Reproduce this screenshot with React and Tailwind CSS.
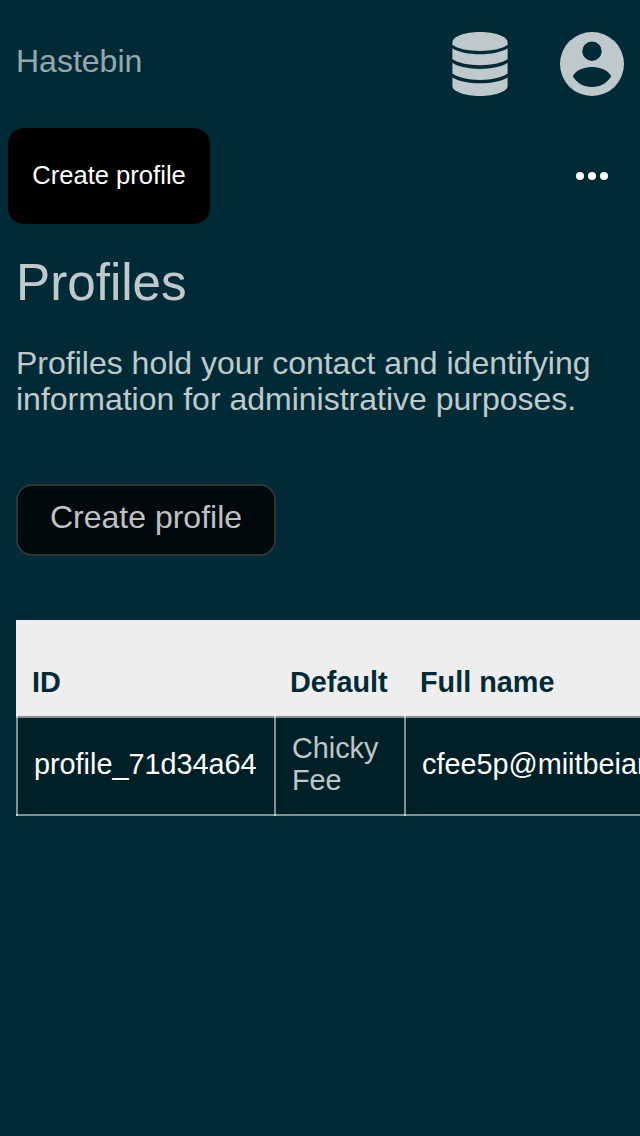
function DatabaseIcon() {
  return (
    <svg className="h-16 w-14" viewBox="0 0 56 64" fill="currentColor" aria-hidden="true">
      <path d="M28 0C43 0 55.600 4.600 55.600 10.200V12.800C50 17 40 18.900 28 18.900C16 18.900 6 17 0.400 12.800V10.200C0.400 4.600 13 0 28 0Z" />
      <path d="M0.400 16.300C6 20.200 17 22.300 28 22.300C39 22.300 50 20.200 55.600 16.300V27C50 31.200 39 33.200 28 33.200C17 33.200 6 31.200 0.400 27Z" />
      <path d="M0.400 30.800C6 34.800 17 36.900 28 36.900C39 36.900 50 34.800 55.600 30.800V41.600C50 45.800 39 47.900 28 47.900C17 47.900 6 45.800 0.400 41.600Z" />
      <path d="M0.400 45.300C6 49.300 17 51.300 28 51.300C39 51.300 50 49.300 55.600 45.300V54C55.600 59.500 43 64 28 64C13 64 0.400 59.500 0.400 54Z" />
    </svg>
  );
}

function AccountIcon() {
  return (
    <svg className="size-16" viewBox="0 0 64 64" fill="currentColor" fillRule="evenodd" aria-hidden="true">
      <path d="M32 0a32 32 0 1 0 0 64a32 32 0 1 0 0-64ZM32 9.500a9.700 9.700 0 1 1 0 19.400a9.700 9.700 0 1 1 0-19.400ZM12.800 44.200C15.500 38.500 23 34.900 32 34.900S48.500 38.500 51.200 44.200C47 51 40.500 55 32 55S17 51 12.800 44.200Z" />
    </svg>
  );
}

function Cell({ children, strong = false }) {
  return (
    <td
      className={`border-y-2 border-white/50 bg-[linear-gradient(90deg,rgba(255,255,255,0.5)_2px,transparent_2px)] pr-4 pb-1 pl-[18px] ${
        strong ? "text-white" : ""
      }`}
    >
      {children}
    </td>
  );
}

export default function App() {
  return (
    <div className="h-[1136px] w-full overflow-hidden bg-[#002b36] font-['Liberation_Sans',Arial,sans-serif] text-[32px] leading-9 text-white/75">
      <header className="flex h-32 items-center justify-between px-4">
        <a className="pb-1.5 text-white/60">Hastebin</a>
        <div className="flex gap-[52px]">
          <DatabaseIcon />
          <AccountIcon />
        </div>
      </header>
      <nav className="flex h-24 items-center justify-between pr-8 pl-2 text-white">
        <button className="h-24 w-[202px] rounded-2xl bg-black pb-0.5 text-[25.6px] leading-8 whitespace-nowrap">Create profile</button>
        <div className="flex gap-1">
          <span className="size-2 rounded-full bg-white" />
          <span className="size-2 rounded-full bg-white" />
          <span className="size-2 rounded-full bg-white" />
        </div>
      </nav>
      <main className="pl-4">
        <h1 className="pt-[30px] text-[51.2px] leading-[58px]">Profiles</h1>
        <p className="mt-[33px] w-[600px]">Profiles hold your contact and identifying information for administrative purposes.</p>
        <button className="mt-[67px] flex h-[72px] w-[260px] items-center justify-center rounded-2xl border-2 border-[#333333] bg-[#00090b] pb-1.5 text-[#bfc1c2]">
          Create profile
        </button>
        <div className="mt-16 overflow-hidden">
          <table className="w-[900px] table-fixed border-separate border-spacing-0 text-[28.8px] leading-8">
            <colgroup>
              <col className="w-[258px]" />
              <col className="w-[130px]" />
              <col />
            </colgroup>
            <thead className="bg-[#eeeeee] text-left text-[#002b36]">
              <tr className="h-24 align-bottom">
                <th className="px-4 pb-[18px]">ID</th>
                <th className="px-4 pb-[18px]">Default</th>
                <th className="px-4 pb-[18px]">Full name</th>
              </tr>
            </thead>
            <tbody>
              <tr className="h-[100px] bg-[#002028]">
                <Cell strong>profile_71d34a64</Cell>
                <Cell>Chicky Fee</Cell>
                <Cell strong>cfee5p@miitbeian.gov.cn</Cell>
              </tr>
            </tbody>
          </table>
        </div>
      </main>
    </div>
  );
}
